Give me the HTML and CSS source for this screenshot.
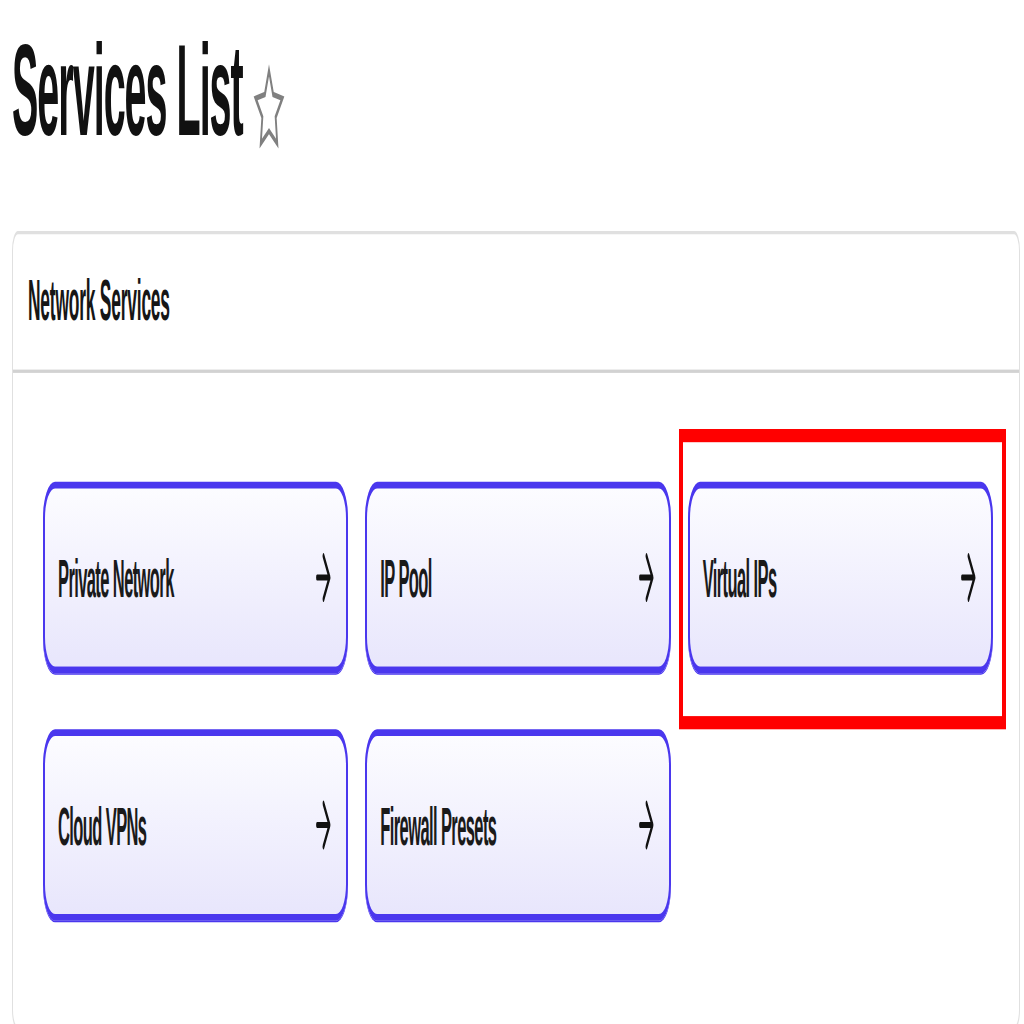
FILE: index.html
```html
<!DOCTYPE html>
<html lang="en">
<head>
  <meta charset="UTF-8" />
  <title>Services List</title>
  <link rel="stylesheet" href="styles.css">
</head>
<body>
  <div class="page">
    <div class="page-title">
      <h1>Services List</h1>
      <svg class="fav-star" width="32" height="28" viewBox="0 0 24 24" preserveAspectRatio="none">
        <polygon points="12,2 15.09,8.26 22,9.27 17,14.14 18.18,21.02 12,17.77 5.82,21.02 7,14.14 2,9.27 8.91,8.26" />
      </svg>
    </div>

    <section class="card">
      <div class="card-header">Network Services</div>
      <div class="card-body">
        <a class="tile" href="#private-network">
          <span>Private Network</span>
          <svg class="arrow" width="16" height="16" viewBox="0 0 16 16"><path d="M2 8H14.5M8.5 1.5L14.5 8L8.5 14.5" /></svg>
        </a>
        <a class="tile" href="#ip-pool">
          <span>IP Pool</span>
          <svg class="arrow" width="16" height="16" viewBox="0 0 16 16"><path d="M2 8H14.5M8.5 1.5L14.5 8L8.5 14.5" /></svg>
        </a>
        <a class="tile selected" href="#virtual-ips">
          <span>Virtual IPs</span>
          <svg class="arrow" width="16" height="16" viewBox="0 0 16 16"><path d="M2 8H14.5M8.5 1.5L14.5 8L8.5 14.5" /></svg>
        </a>
        <a class="tile" href="#cloud-vpns">
          <span>Cloud VPNs</span>
          <svg class="arrow" width="16" height="16" viewBox="0 0 16 16"><path d="M2 8H14.5M8.5 1.5L14.5 8L8.5 14.5" /></svg>
        </a>
        <a class="tile" href="#firewall-presets">
          <span>Firewall Presets</span>
          <svg class="arrow" width="16" height="16" viewBox="0 0 16 16"><path d="M2 8H14.5M8.5 1.5L14.5 8L8.5 14.5" /></svg>
        </a>
      </div>
    </section>
  </div>
</body>
</html>
```

FILE: styles.css
```css
html {
  overflow: hidden;
}

body {
  margin: 0;
  height: 1024px;
  overflow: hidden;
  background: #fff;
  font-family: "Liberation Sans", Arial, sans-serif;
  color: #111;
}

/* the whole sheet is drawn tall: 3.3x vertically */
.page {
  padding: 5px 4px 0 12px;
  transform: scaleY(3.3);
  transform-origin: top left;
}

.page-title {
  display: flex;
  align-items: flex-start;
  gap: 10px;
}

h1 {
  margin: 0;
  font-size: 39.5px;
  line-height: 45px;
  font-weight: bold;
  letter-spacing: -1px;
  color: #111;
}

.fav-star {
  margin-top: 14px;
}

.fav-star polygon {
  fill: none;
  stroke: #808080;
  stroke-width: 1.4;
  stroke-linejoin: miter;
}

.card {
  margin-top: 20px;
  background: white;
  border: 1px solid #e0e0e0;
  border-radius: 6px;
}

.card-header {
  padding: 10px 15px 11px;
  font-size: 17.4px;
  line-height: 20px;
  font-weight: bold;
  letter-spacing: -0.2px;
  color: #161616;
  border-bottom: 1px solid #d2d2d2;
}

.card-body {
  display: grid;
  grid-template-columns: repeat(3, 1fr);
  gap: 17px;
  padding: 33px 26px 32px 30px;
}

.tile {
  position: relative;
  display: flex;
  align-items: center;
  justify-content: space-between;
  height: 58px;
  box-sizing: border-box;
  padding: 0 15px 0 13px;
  border: 2px solid #4a37ee;
  border-radius: 12px / 11px;
  background: linear-gradient(to bottom, #fcfcff, #e8e6fc);
  box-shadow: 0 0.5px 0 #4a37ee;
  font-size: 16.5px;
  font-weight: bold;
  letter-spacing: -0.6px;
  color: #1a1a1a;
  text-decoration: none;
}

.arrow path {
  fill: none;
  stroke: #111;
  stroke-width: 1.8;
  stroke-linecap: round;
  stroke-linejoin: round;
}

/* red outline around the picked service */
.tile.selected::after {
  content: "";
  position: absolute;
  top: -18px;
  left: -11px;
  right: -15px;
  bottom: -19px;
  border: 4px solid #f00;
  pointer-events: none;
}
```
